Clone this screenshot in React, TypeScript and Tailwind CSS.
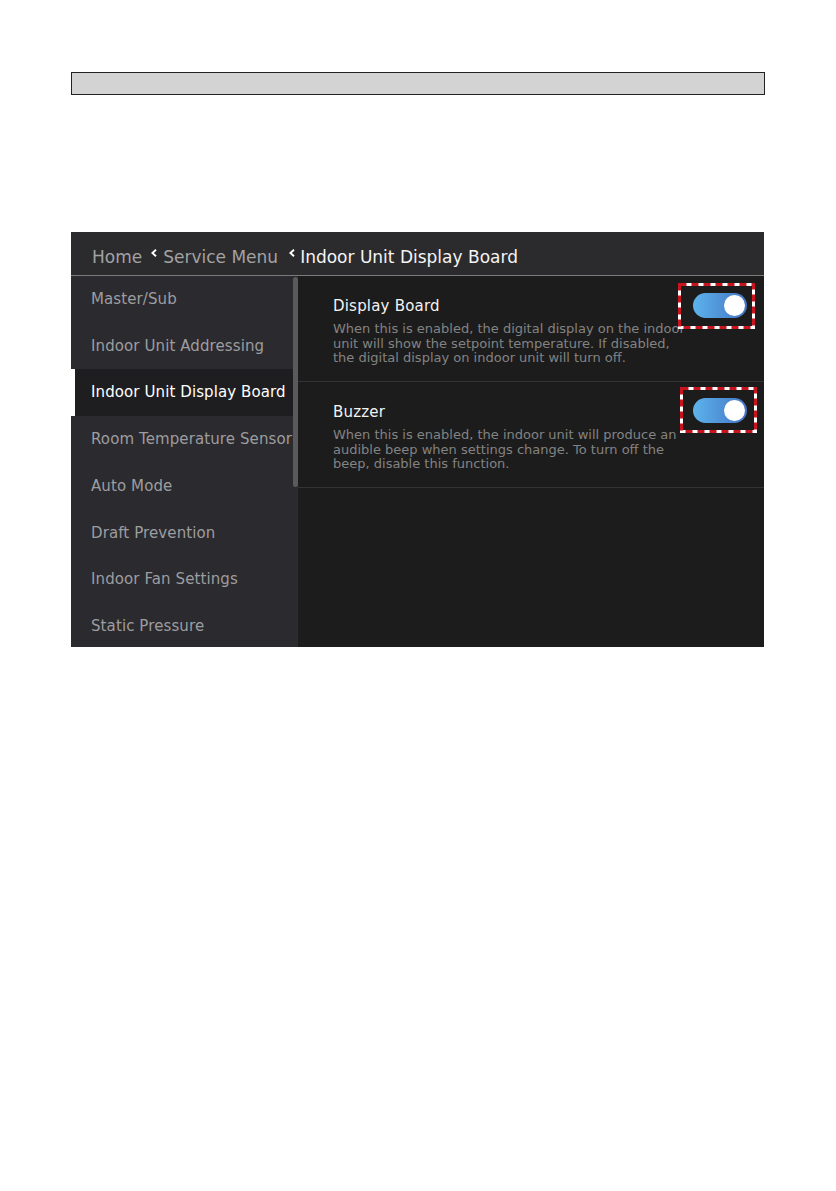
import React from "react";

const Chevron = ({ className }: { className?: string }) => (
  <svg width="6" height="8" viewBox="0 0 6 8" className={className}>
    <polyline points="5,0.8 1.4,4 5,7.2" fill="none" stroke="#ffffff" strokeWidth="1.9" />
  </svg>
);

const DashedBox = ({ shifted }: { shifted?: boolean }) => (
  <svg
    width="77"
    height="46"
    viewBox="0 0 77 46"
    className={shifted ? "absolute -left-[13px] -top-[11px]" : "absolute -left-[15px] -top-[10px]"}
  >
    <rect x="1.5" y="1.5" width="74" height="43" fill="none" stroke="#ffffff" strokeWidth="3" />
    <rect x="1.5" y="1.5" width="74" height="43" fill="none" stroke="#c8141e" strokeWidth="3" strokeDasharray="7 5" />
  </svg>
);

const Toggle = ({ shifted }: { shifted?: boolean }) => (
  <div className="relative shrink-0">
    <div className="flex h-[25px] w-[54px] items-center justify-end rounded-full bg-gradient-to-r from-[#5db3ec] to-[#4574c4] pr-[2px]">
      <div className="h-[21px] w-[21px] rounded-full bg-white" />
    </div>
    <DashedBox shifted={shifted} />
  </div>
);

const items = [
  "Master/Sub",
  "Indoor Unit Addressing",
  "Indoor Unit Display Board",
  "Room Temperature Sensor",
  "Auto Mode",
  "Draft Prevention",
  "Indoor Fan Settings",
  "Static Pressure",
];

const settings = [
  {
    title: "Display Board",
    desc: "When this is enabled, the digital display on the indoor unit will show the setpoint temperature. If disabled, the digital display on indoor unit will turn off.",
    toggleTop: "mt-[17px]",
    shifted: false,
  },
  {
    title: "Buzzer",
    desc: "When this is enabled, the indoor unit will produce an audible beep when settings change. To turn off the beep, disable this function.",
    toggleTop: "mt-[16px]",
    shifted: true,
  },
];

export default function App() {
  return (
    <div className="min-h-[1191px] w-[836px] bg-white pt-[72px]" style={{ fontFamily: '"DejaVu Sans", sans-serif' }}>
      <div className="ml-[71px] h-[23px] w-[694px] border-[1.5px] border-[#222222] bg-[#d3d3d3]" />
      <div className="ml-[71px] mt-[137px] flex h-[415px] w-[693px] flex-col bg-[#1c1c1c]">
        <div className="flex h-[43px] items-start bg-[#2b2b2e] pl-[21px] pt-[15px] text-[17px] leading-[20px]">
          <span className="text-[#a2a2a2]">Home</span>
          <Chevron className="ml-[9px] mr-[6px] mt-[2px]" />
          <span className="text-[#a2a2a2]">Service Menu</span>
          <Chevron className="ml-[11px] mr-[5px] mt-[2px]" />
          <span className="text-[#f4f4f4]">Indoor Unit Display Board</span>
        </div>
        <div className="h-px bg-[#7a7a7a]" />
        <div className="flex min-h-0 flex-1">
          <div className="flex w-[227px] bg-[#2b2a2f]">
            <div className="flex min-w-0 flex-1 flex-col overflow-hidden">
              {items.map((it, i) => {
                const sel = i === 2;
                return (
                  <div
                    key={it}
                    className={
                      sel
                        ? "flex h-[46.7px] shrink-0 items-center border-l-4 border-white bg-[#1e1e20] pl-[16px] text-[15px] tracking-[0.1px] whitespace-nowrap text-white"
                        : "flex h-[46.7px] shrink-0 items-center pl-[20px] text-[15px] tracking-[0.1px] whitespace-nowrap text-[#9d9d9f]"
                    }
                  >
                    {it}
                  </div>
                );
              })}
            </div>
            <div className="w-[5px] shrink-0 pt-[1px]">
              <div className="h-[210px] w-[5px] rounded-full bg-[#5a5a5c]" />
            </div>
          </div>
          <div className="flex flex-1 flex-col">
            {settings.map((s) => (
              <div key={s.title} className="flex h-[106px] justify-between border-b border-[#333335] pl-[35px] pr-[17px]">
                <div className="w-[358px] pt-[21px]">
                  <div className="text-[15px] leading-[18px] tracking-[0.2px] text-[#f2f2f2]">{s.title}</div>
                  <div className="mt-[7px] text-[13px] leading-[14.7px] text-[#838383]">{s.desc}</div>
                </div>
                <div className={s.toggleTop}>
                  <Toggle shifted={s.shifted} />
                </div>
              </div>
            ))}
          </div>
        </div>
      </div>
    </div>
  );
}
